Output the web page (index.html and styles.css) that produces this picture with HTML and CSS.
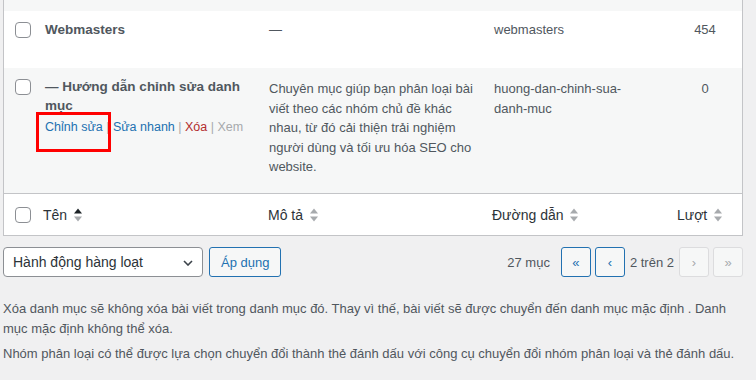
FILE: index.html
```html
<!DOCTYPE html>
<html lang="vi">
<head>
<meta charset="utf-8">
<title>Chuyên mục</title>
<link rel="stylesheet" href="styles.css">
</head>
<body>
<div class="page">
  <div class="table-wrap">
    <table class="terms">
      <colgroup>
        <col class="c-check"><col class="c-name"><col class="c-desc"><col class="c-slug"><col class="c-count">
      </colgroup>
      <tbody>
        <tr class="alt row-clip"><td colspan="5"></td></tr>
        <tr class="row-web">
          <td class="check"><span class="cb"></span></td>
          <td class="name"><strong class="title">Webmasters</strong></td>
          <td class="desc">—</td>
          <td class="slug">webmasters</td>
          <td class="count">454</td>
        </tr>
        <tr class="alt row-guide">
          <td class="check"><span class="cb"></span></td>
          <td class="name">
            <strong class="title">— Hướng dẫn chỉnh sửa danh mục</strong>
            <div class="actions"><span class="hl"><a class="link">Chỉnh sửa</a></span><span class="sep"> | </span><a class="link">Sửa nhanh</a><span class="sep"> | </span><a class="del">Xóa</a><span class="sep"> | </span><span class="view">Xem</span></div>
          </td>
          <td class="desc">Chuyên mục giúp bạn phân loại bài viết theo các nhóm chủ đề khác nhau, từ đó cải thiện trải nghiệm người dùng và tối ưu hóa SEO cho website.</td>
          <td class="slug">huong-dan-chinh-sua-danh-muc</td>
          <td class="count">0</td>
        </tr>
      </tbody>
      <tfoot>
        <tr>
          <td class="check"><span class="cb"></span></td>
          <th class="sort s-name"><span class="lbl">Tên<svg class="ind" width="8" height="14" viewBox="0 0 8 14"><polygon points="4,0.5 8,5.5 0,5.5" fill="#1d2327"/><polygon points="0,8.5 8,8.5 4,13.5" fill="#a7aaad"/></svg></span></th>
          <th class="sort s-desc"><span class="lbl">Mô tả<svg class="ind" width="8" height="14" viewBox="0 0 8 14"><polygon points="4,0.5 8,5.5 0,5.5" fill="#a7aaad"/><polygon points="0,8.5 8,8.5 4,13.5" fill="#a7aaad"/></svg></span></th>
          <th class="sort s-slug"><span class="lbl">Đường dẫn<svg class="ind" width="8" height="14" viewBox="0 0 8 14"><polygon points="4,0.5 8,5.5 0,5.5" fill="#a7aaad"/><polygon points="0,8.5 8,8.5 4,13.5" fill="#a7aaad"/></svg></span></th>
          <th class="sort s-count"><span class="lbl">Lượt<svg class="ind" width="8" height="14" viewBox="0 0 8 14"><polygon points="4,0.5 8,5.5 0,5.5" fill="#a7aaad"/><polygon points="0,8.5 8,8.5 4,13.5" fill="#a7aaad"/></svg></span></th>
        </tr>
      </tfoot>
    </table>
  </div>

  <div class="tablenav">
    <div class="bulk">
      <div class="select"><span>Hành động hàng loạt</span><svg class="chev" width="10" height="6" viewBox="0 0 10 6"><polyline points="1,1 5,5 9,1" fill="none" stroke="#3c434a" stroke-width="1.6"/></svg></div>
      <div class="btn">Áp dụng</div>
    </div>
    <div class="pages">
      <span class="num">27 mục</span>
      <span class="pbtn">«</span>
      <span class="pbtn">‹</span>
      <span class="cur">2 trên 2</span>
      <span class="pbtn disabled">›</span>
      <span class="pbtn disabled">»</span>
    </div>
  </div>

  <div class="notes">
    <p>Xóa danh mục sẽ không xóa bài viết trong danh mục đó. Thay vì thế, bài viết sẽ được chuyển đến danh mục mặc định . Danh mục mặc định không thể xóa.</p>
    <p>Nhóm phân loại có thể được lựa chọn chuyển đổi thành thẻ đánh dấu với công cụ chuyển đổi nhóm phân loại và thẻ đánh dấu.</p>
  </div>
</div>
</body>
</html>
```

FILE: styles.css
```css
* { box-sizing: border-box; }

body {
  margin: 0;
  background: #f0f0f1;
  font-family: "Liberation Sans", Arial, sans-serif;
  font-size: 13px;
  color: #50575e;
}

.page {
  width: 740px;
  margin-left: 3px;
}

.table-wrap {
  border: 1px solid #c3c4c7;
  border-top: 0;
  background: #fff;
}

.terms {
  width: 100%;
  border-collapse: separate;
  border-spacing: 0;
  table-layout: fixed;
}

.c-check { width: 31px; }
.c-name { width: 224px; }
.c-desc { width: 227px; }
.c-slug { width: 182px; }
.c-count { width: 74px; }

.terms td,
.terms th {
  padding: 0;
  vertical-align: top;
  text-align: left;
  font-weight: normal;
}

.alt { background: #f6f7f7; }

.row-clip { height: 11px; }
.row-web { height: 57px; }
.row-guide { height: 125px; }

.check { padding: 11px 0 0 11px !important; }

.cb {
  display: block;
  width: 16px;
  height: 16px;
  border: 1px solid #8c8f94;
  border-radius: 4px;
  background: #fff;
}

.name { padding: 9px 10px 0 !important; }

.title {
  display: block;
  font-weight: bold;
  font-size: 13.5px;
  line-height: 19px;
  color: #50575e;
}

.actions {
  padding-top: 2px;
  line-height: 21px;
  font-size: 12.5px;
  white-space: nowrap;
}

.link { color: #2271b1; }
.del { color: #b32d2e; }
.view { color: #a7aaad; }
.sep { color: #a7aaad; }

.hl {
  position: relative;
  display: inline-block;
}

.hl::after {
  content: "";
  position: absolute;
  left: -9px;
  top: -5px;
  width: 69px;
  height: 34px;
  border: 3px solid #ff0000;
}

.desc {
  padding: 9px 10px 0 !important;
  line-height: 19.5px;
}

.slug {
  padding: 9px 24px 0 8px !important;
  line-height: 19.5px;
}

.count {
  padding-top: 9px !important;
  line-height: 19.5px;
  text-align: center !important;
}

.row-guide .desc,
.row-guide .slug,
.row-guide .count { padding-top: 11px !important; }

tfoot tr { height: 42px; }

.terms tfoot td,
.terms tfoot th {
  border-top: 1px solid #c3c4c7;
  vertical-align: middle;
}

tfoot .check { padding: 0 0 0 11px !important; }

.sort {
  font-size: 14px;
  color: #2c3338;
}

.s-name { padding-left: 8px !important; }
.s-desc { padding-left: 9px !important; }
.s-slug { padding-left: 6px !important; }
.s-count { padding-left: 9px !important; }

.lbl {
  display: inline-flex;
  align-items: center;
  gap: 7px;
  line-height: 20px;
}

.ind { display: block; }

.tablenav {
  margin-top: 11px;
  height: 30px;
  display: flex;
  justify-content: space-between;
  align-items: center;
}

.bulk {
  display: flex;
  gap: 6px;
}

.select {
  width: 200px;
  height: 30px;
  border: 1px solid #8c8f94;
  border-radius: 4px;
  background: #fff;
  display: flex;
  align-items: center;
  justify-content: space-between;
  padding: 0 9px;
  font-size: 14px;
  color: #2c3338;
}

.chev {
  display: block;
  margin-top: 2px;
}

.btn {
  height: 30px;
  padding: 0 11px;
  border: 1px solid #2271b1;
  border-radius: 3px;
  background: #f6f7f7;
  color: #2271b1;
  font-size: 13px;
  display: flex;
  align-items: center;
}

.pages {
  display: flex;
  align-items: center;
  gap: 4px;
}

.num { margin-right: 7px; }
.cur { margin: 0 1px; }

.pbtn {
  width: 30px;
  height: 30px;
  border: 1px solid #2271b1;
  border-radius: 3px;
  background: #f6f7f7;
  color: #2271b1;
  display: flex;
  align-items: center;
  justify-content: center;
  font-size: 13px;
}

.pbtn.disabled {
  border-color: #dcdcde;
  color: #a7aaad;
}

.notes { margin-top: 22px; }

.notes p {
  margin: 0 0 6px;
  line-height: 19.5px;
}
```
